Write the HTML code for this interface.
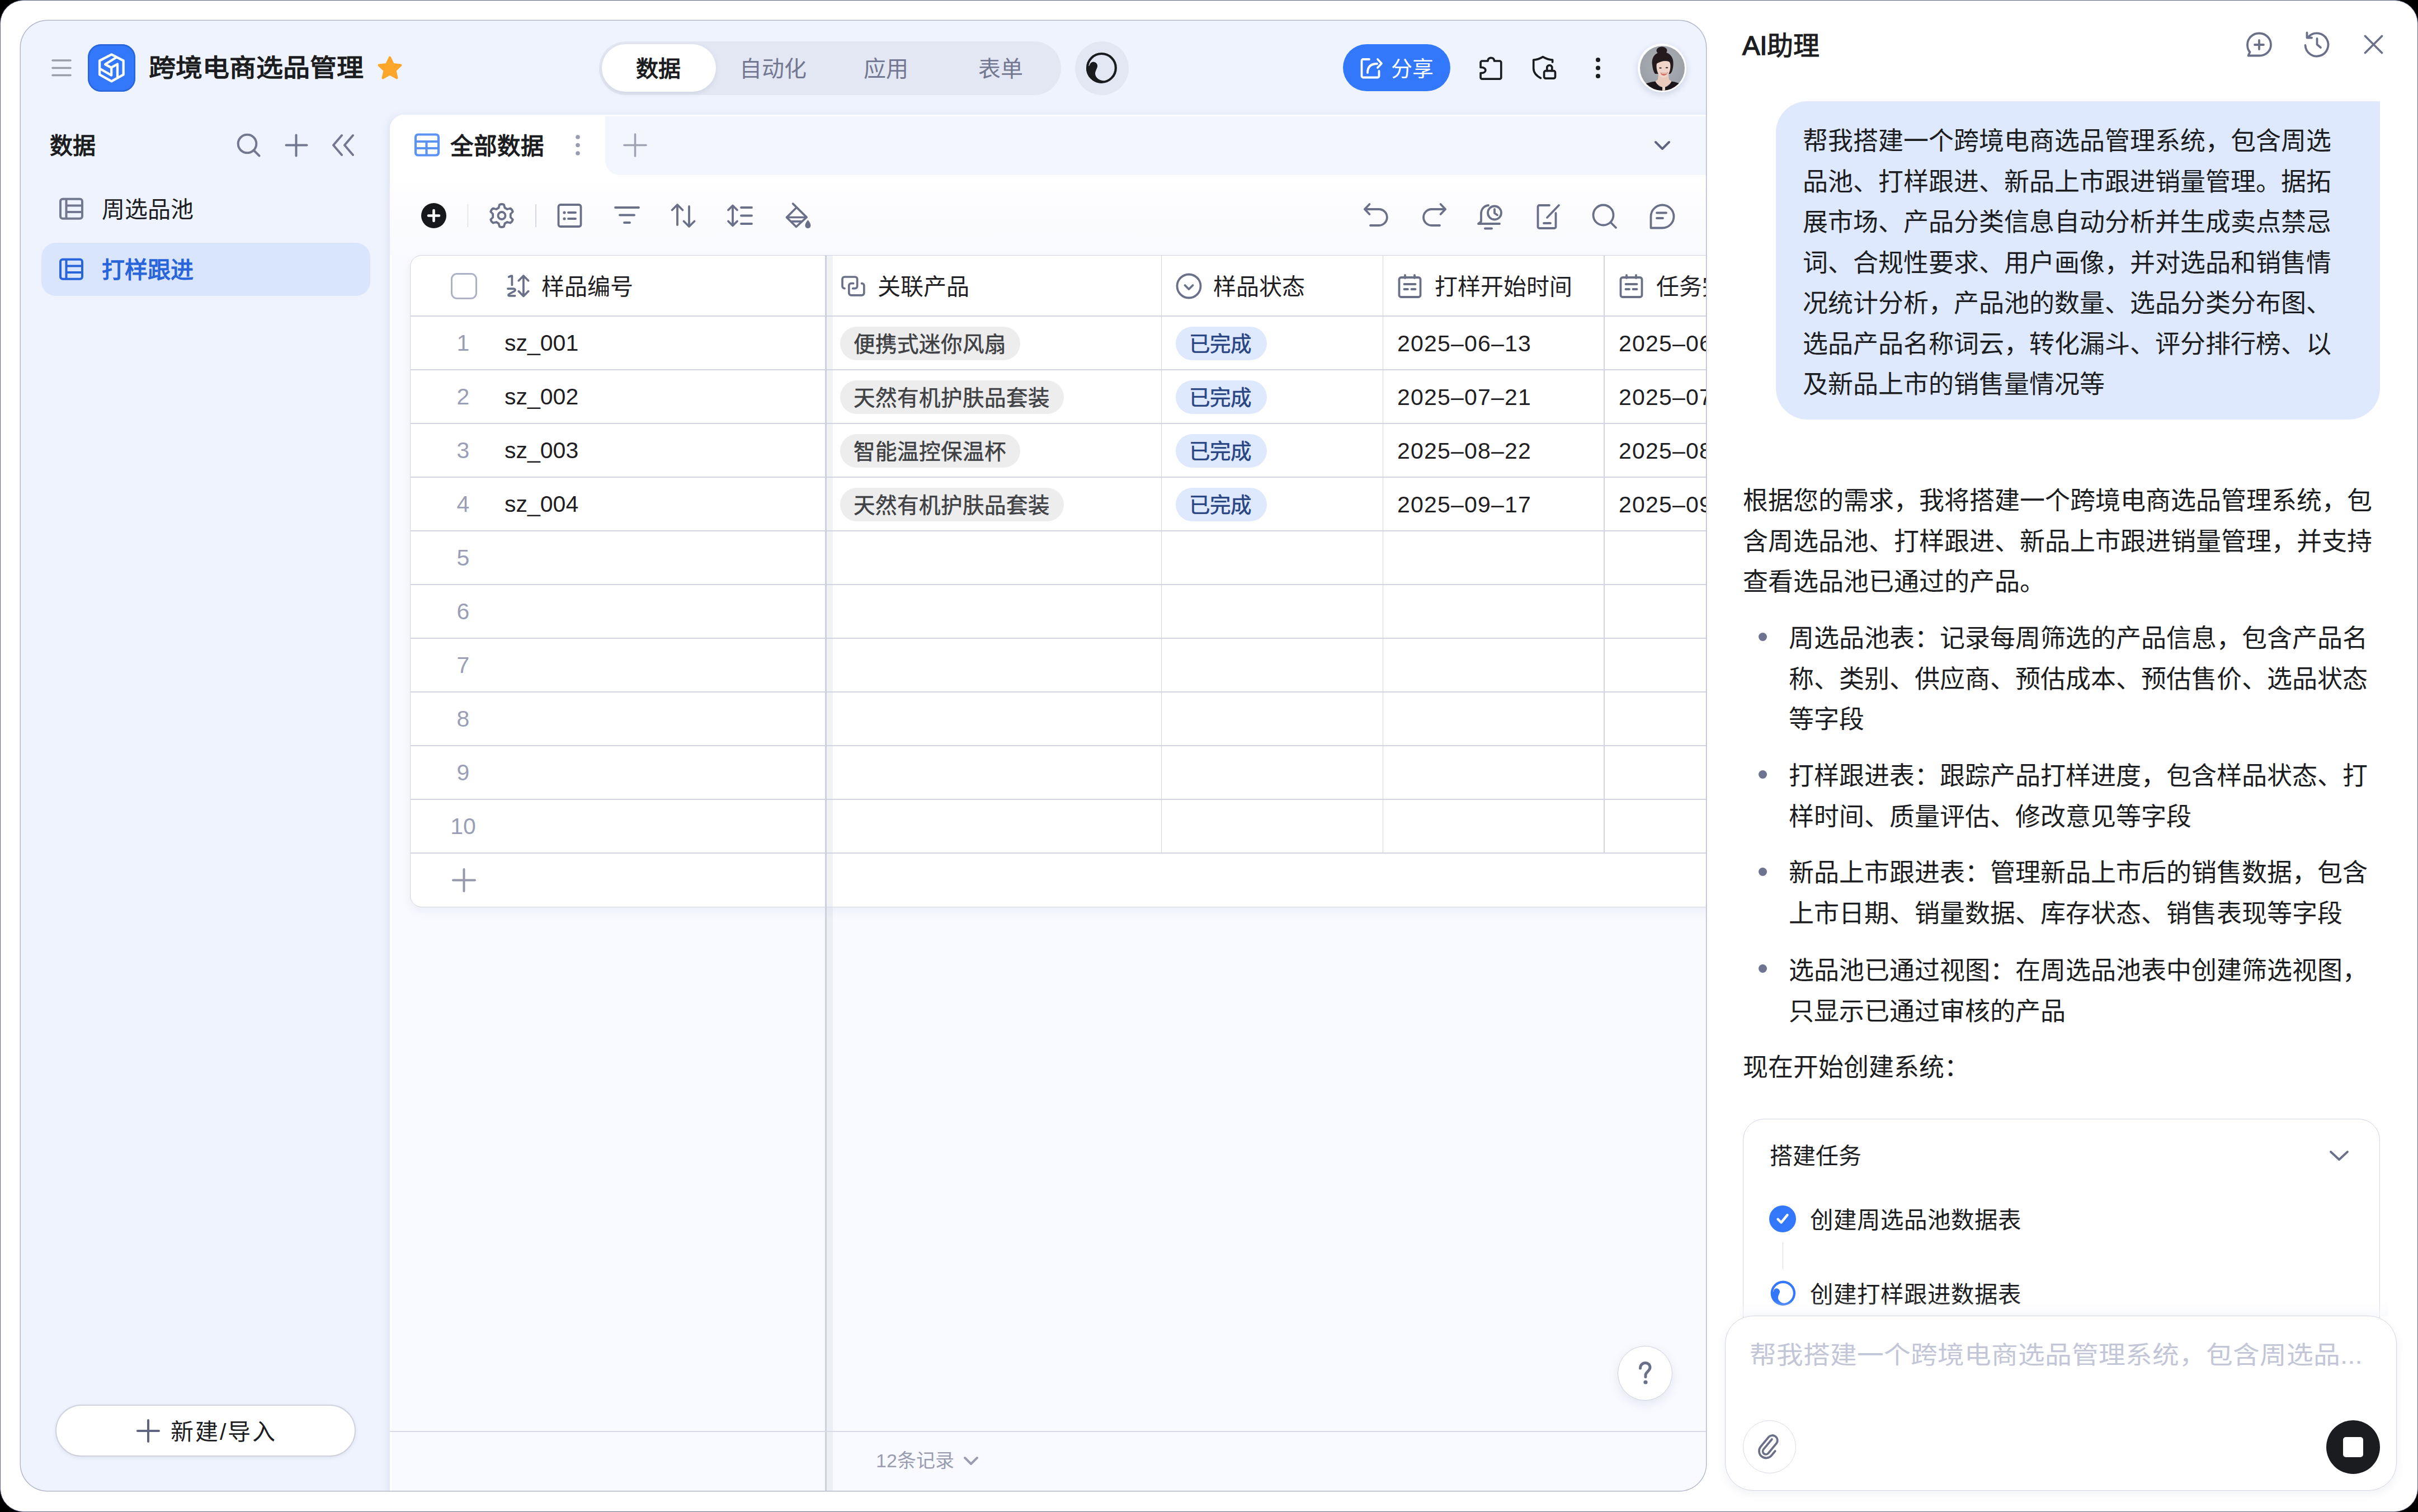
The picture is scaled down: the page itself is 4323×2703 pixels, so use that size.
<!DOCTYPE html>
<html lang="zh-CN"><head><meta charset="utf-8">
<style>
*{box-sizing:border-box;margin:0;padding:0}
html,body{width:4323px;height:2703px;overflow:hidden;background:#000}
body{position:relative;font-family:"Liberation Sans",sans-serif;color:#1F2023}
.a{position:absolute}
svg{position:absolute;overflow:visible}
#frame{left:0;top:0;width:4323px;height:2703px;background:#fff;border:1.5px solid #60668A;border-radius:42px}
#main{left:37px;top:37px;width:3012.5px;height:2628px;border-radius:48px;overflow:hidden;background:#EEF3FE;box-shadow:0 0 0 1.5px #B3B7CB}
#pg{left:-37px;top:-37px;width:4323px;height:2703px}
.t{white-space:nowrap;line-height:1}
</style></head>
<body>
<div id="frame" class="a"></div>
<div id="main" class="a"><div id="pg" class="a">

<!-- header -->
<svg style="left:90px;top:104px" width="40" height="34" viewBox="0 0 40 34"><g stroke="#9A9DAA" stroke-width="3.6" stroke-linecap="round"><line x1="4" y1="4" x2="36" y2="4"/><line x1="4" y1="17.5" x2="36" y2="17.5"/><line x1="4" y1="30.5" x2="36" y2="30.5"/></g></svg>
<div class="a" style="left:157px;top:79px;width:85px;height:85px;border-radius:24px;background:#3377FA;box-shadow:inset 0 0 0 2.5px #2A66DA"></div>
<svg style="left:157px;top:79px" width="85" height="85" viewBox="0 0 85 85"><g fill="none" stroke="#fff" stroke-width="4.3" stroke-linejoin="round" stroke-linecap="round"><path d="M42.4 18.4 L63.7 29.5 L63.7 54.4 L42.4 66.3 L21.1 54.4 L21.1 29.5 Z"/><path d="M51.1 23.5 L31.1 36 L42.2 42.2 L42.2 55.6 L21.1 43.5"/><path d="M42.2 41.6 L53 35.6 L53 60.4"/></g></svg>
<div class="a t" style="left:266px;top:98px;font-size:48px;font-weight:700;color:#1C1D21;transform:scaleY(0.92);transform-origin:0 50%">跨境电商选品管理</div>
<svg style="left:673px;top:99px" width="48" height="46" viewBox="0 0 48 46"><path d="M24 3.5 L30 16 L43.5 17.5 L33.5 27 L36.5 40.5 L24 33.5 L11.5 40.5 L14.5 27 L4.5 17.5 L18 16 Z" fill="#FBA62B" stroke="#FBA62B" stroke-width="4" stroke-linejoin="round"/></svg>

<div class="a" style="left:1071px;top:74px;width:826px;height:96px;border-radius:48px;background:#E3E7F3"></div>
<div class="a" style="left:1076px;top:79px;width:204px;height:85px;border-radius:43px;background:#fff;box-shadow:0 3px 8px rgba(80,90,130,0.13)"></div>
<div class="a t" style="left:1137px;top:103px;font-size:40px;font-weight:700;color:#1C1D21">数据</div>
<div class="a t" style="left:1322px;top:103px;font-size:40px;color:#737891">自动化</div>
<div class="a t" style="left:1544px;top:103px;font-size:40px;color:#737891">应用</div>
<div class="a t" style="left:1749px;top:103px;font-size:40px;color:#737891">表单</div>
<div class="a" style="left:1922px;top:74px;width:96px;height:96px;border-radius:48px;background:#E3E7F3"></div>
<svg style="left:1938px;top:90px" width="64" height="64" viewBox="0 0 64 64"><circle cx="31.4" cy="31.4" r="25.4" fill="none" stroke="#1A1B1F" stroke-width="4.2"/><path d="M9.8 27 A7.1 7.1 0 0 1 24 28.5 C23.5 33 20 36.5 20 42 C20.5 49 28 54.5 37 54.5 L31.4 58.8 A27.4 27.4 0 0 1 4 31.4 Z" fill="#1A1B1F"/></svg>

<div class="a" style="left:2401px;top:79px;width:192px;height:84px;border-radius:42px;background:#3377FA"></div>
<svg style="left:2430px;top:100px" width="46" height="44" viewBox="0 0 46 44"><g fill="none" stroke="#fff" stroke-width="3.8" stroke-linecap="round" stroke-linejoin="round"><path d="M18 6 H7 a2.5 2.5 0 0 0 -2.5 2.5 V36 a2.5 2.5 0 0 0 2.5 2.5 H33 a2.5 2.5 0 0 0 2.5 -2.5 V27"/><path d="M15 30 C15 19 21 14 32 14"/><path d="M33 6 L40 13.5 L33 21"/></g></svg>
<div class="a t" style="left:2487px;top:104px;font-size:38px;color:#fff">分享</div>
<svg style="left:2640px;top:96px" width="50" height="50" viewBox="0 0 50 50"><path d="M10 13 H20 V12 A5.9 5.9 0 0 1 31.5 12 V13 H41 a2.8 2.8 0 0 1 2.8 2.8 V42.4 a2.8 2.8 0 0 1 -2.8 2.8 H9.9 a2.8 2.8 0 0 1 -2.8 -2.8 V34.6 H8 C18.5 34.6 18.5 24.4 8 24.4 H7.1 V15.8 a2.8 2.8 0 0 1 2.9 -2.8 Z" fill="none" stroke="#1B1C1F" stroke-width="3.7" stroke-linejoin="round"/></svg>
<svg style="left:2736px;top:96px" width="52" height="50" viewBox="0 0 52 50"><g fill="none" stroke="#1B1C1F" stroke-width="3.7" stroke-linecap="round" stroke-linejoin="round"><path d="M18.5 43.6 C10 39 5.7 33 5.7 26 V11 C11 11 17 9 22.4 5.7 C28 9 33 11 39.6 11 V15"/><rect x="24.6" y="30.6" width="19.9" height="13.6" rx="3"/><path d="M29.8 30.6 V25.1 a4.5 4.5 0 0 1 9 0 V30.6"/></g></svg>
<svg style="left:2850px;top:100px" width="14" height="44" viewBox="0 0 14 44"><g fill="#1B1C1F"><circle cx="7" cy="7" r="4"/><circle cx="7" cy="21.5" r="4"/><circle cx="7" cy="36" r="4"/></g></svg>
<!-- avatar -->
<div class="a" style="left:2928px;top:78px;width:87px;height:87px;border-radius:50%;background:#fff;box-shadow:0 4px 12px rgba(60,70,110,0.18)"></div>
<svg style="left:2931.5px;top:81.5px" width="80" height="80" viewBox="0 0 80 80"><defs><clipPath id="av"><circle cx="40" cy="40" r="40"/></clipPath><radialGradient id="avbg" cx="0.5" cy="0.4" r="0.6"><stop offset="0" stop-color="#ADB0B6"/><stop offset="1" stop-color="#9A9EA6"/></radialGradient></defs><g clip-path="url(#av)"><rect width="80" height="80" fill="url(#avbg)"/><ellipse cx="39" cy="8.5" rx="9.5" ry="7" fill="#231B1D"/><path d="M22 34 C20 20 28 11 40 11 C52 11 61 19 59.5 34 C59 42 57 48 54 50 L27 50 C24 46 22.5 40 22 34 Z" fill="#231B1D"/><path d="M33 50 H51 L52 60 L58 64.5 L42 76 L26 64.5 L32 60 Z" fill="#E9C9BC"/><path d="M29.5 36 C29.5 27 34 23.5 41.5 23.5 C49 23.5 54.5 27 54.5 36 C54.5 47 49 57 42 57 C35 57 29.5 47 29.5 36 Z" fill="#EFD5CA"/><path d="M28 33 C30 24 37 21 43 21 C50 21 55 25 56 31 C51 26 40 25 28 33 Z" fill="#231B1D"/><ellipse cx="36.5" cy="39.5" rx="2.3" ry="1.3" fill="#4A3A3A"/><ellipse cx="48" cy="39" rx="2.3" ry="1.3" fill="#4A3A3A"/><path d="M36.5 47.5 C41 49 46 49 50 46.5 C49 51.5 45 53 42.5 53 C40 53 37.5 51.5 36.5 47.5 Z" fill="#DB6A5F"/><path d="M38 48.3 C41.5 49.5 45.5 49.5 48.8 47.8 L48.3 49.3 C45 50.5 41.5 50.5 38.5 49.6 Z" fill="#F3E6E0"/><path d="M0 80 L4 71 C10 67 18 64.5 27.5 63.5 C31 70 36 74 42 74 C48 74 53 70 56.5 63.5 C64 64.5 72 67 78 71 L82 80 Z" fill="#1C141B"/><rect x="40" y="73" width="5" height="8" fill="#E8D2C5"/></g></svg>


<!-- sidebar -->
<div class="a t" style="left:89px;top:241px;font-size:41px;font-weight:700;color:#1C1D21">数据</div>
<svg style="left:420px;top:235px" width="50" height="48" viewBox="0 0 50 48"><g fill="none" stroke="#737891" stroke-width="4" stroke-linecap="round"><circle cx="22" cy="22" r="16.3"/><line x1="34" y1="34" x2="43.5" y2="43.5"/></g></svg>
<svg style="left:507px;top:237px" width="45" height="45" viewBox="0 0 45 45"><g stroke="#737891" stroke-width="4" stroke-linecap="round"><line x1="22.5" y1="4.5" x2="22.5" y2="41.5"/><line x1="4.5" y1="22.5" x2="41.5" y2="22.5"/></g></svg>
<svg style="left:591px;top:238px" width="46" height="43" viewBox="0 0 46 43"><g fill="none" stroke="#737891" stroke-width="4" stroke-linecap="round" stroke-linejoin="round"><path d="M20 4 L5 21.5 L20 39"/><path d="M40 4 L25 21.5 L40 39"/></g></svg>

<svg style="left:104px;top:352px" width="47" height="43" viewBox="0 0 47 43"><g fill="none" stroke="#737891" stroke-width="4"><rect x="4" y="3.8" width="39" height="35" rx="4"/><line x1="14.5" y1="3.8" x2="14.5" y2="38.8"/><line x1="14.5" y1="15.5" x2="43" y2="15.5"/><line x1="14.5" y1="27" x2="43" y2="27"/></g></svg>
<div class="a t" style="left:182px;top:355px;font-size:41px;color:#1C1D21">周选品池</div>
<div class="a" style="left:74px;top:434px;width:588px;height:95px;border-radius:26px;background:#D9E5FC"></div>
<svg style="left:104px;top:460px" width="47" height="43" viewBox="0 0 47 43"><g fill="none" stroke="#2864DA" stroke-width="4"><rect x="4" y="3.8" width="39" height="35" rx="4"/><line x1="14.5" y1="3.8" x2="14.5" y2="38.8"/><line x1="14.5" y1="15.5" x2="43" y2="15.5"/><line x1="14.5" y1="27" x2="43" y2="27"/></g></svg>
<div class="a t" style="left:182px;top:463px;font-size:41px;font-weight:700;color:#2864DA">打样跟进</div>

<div class="a" style="left:99px;top:2511px;width:537px;height:93px;border-radius:47px;background:#fff;border:2px solid #CFD2DE;box-shadow:0 2px 6px rgba(80,90,130,0.10)"></div>
<svg style="left:243px;top:2536px" width="44" height="44" viewBox="0 0 44 44"><g stroke="#5F6480" stroke-width="4" stroke-linecap="round"><line x1="22" y1="3" x2="22" y2="41"/><line x1="3" y1="22" x2="41" y2="22"/></g></svg>
<div class="a t" style="left:305px;top:2540px;font-size:41px;color:#1C1D21;letter-spacing:3px">新建/导入</div>


<!-- content panel -->
<div id="content" class="a" style="left:697px;top:205px;width:2400px;height:2500px;background:#F9FAFF;border-top-left-radius:26px;box-shadow:-5px 0 12px rgba(120,130,170,0.10), inset 3px 0 0 #fff;overflow:hidden">
</div>
<!-- tab bar -->
<div class="a" style="left:697px;top:205px;width:2400px;height:251px;background:linear-gradient(180deg,#FFFFFF 0px,#FFFFFF 108px,#FDFDFF 150px,#F9FAFD 251px);border-top-left-radius:26px"></div>
<div class="a" style="left:1082px;top:208px;width:2000px;height:105px;background:#F3F6FD;border-bottom-left-radius:26px"></div>
<div class="a" style="left:697px;top:205px;width:385px;height:108px;background:#fff;border-top-left-radius:26px;border-top-right-radius:26px"></div>
<svg style="left:740px;top:238px" width="47" height="43" viewBox="0 0 47 43"><g fill="none" stroke="#5B93F5" stroke-width="4.2"><rect x="3" y="2.5" width="41" height="37" rx="4.5"/><line x1="3" y1="15" x2="44" y2="15"/><line x1="3" y1="27" x2="44" y2="27"/><line x1="22.5" y1="15" x2="22.5" y2="39.5"/></g></svg>
<div class="a t" style="left:805px;top:241px;font-size:41.5px;font-weight:700;color:#1C1D21">全部数据</div>
<svg style="left:1026px;top:238px" width="14" height="44" viewBox="0 0 14 44"><g fill="#9A9DAF"><circle cx="7" cy="7" r="3.8"/><circle cx="7" cy="21.5" r="3.8"/><circle cx="7" cy="36" r="3.8"/></g></svg>
<svg style="left:1113px;top:237px" width="45" height="45" viewBox="0 0 45 45"><g stroke="#A0A3B3" stroke-width="3.6" stroke-linecap="round"><line x1="22.5" y1="3" x2="22.5" y2="42"/><line x1="3" y1="22.5" x2="42" y2="22.5"/></g></svg>
<svg style="left:2954px;top:248px" width="36" height="24" viewBox="0 0 36 24"><path d="M6 6 L18 18 L30 6" fill="none" stroke="#5F6480" stroke-width="4" stroke-linecap="round" stroke-linejoin="round"/></svg>

<!-- table -->
<div class="a" style="left:733px;top:456px;width:2400px;height:1166px;background:#fff;border:1.8px solid #D2D4E1;border-radius:21px 0 0 21px;box-shadow:0 8px 16px rgba(90,100,140,0.07)"></div>
<div class="a" style="left:734px;top:563.75px;width:2400px;height:1.8px;background:#D2D4E1"></div>
<div class="a" style="left:734px;top:659.75px;width:2400px;height:1.8px;background:#D2D4E1"></div>
<div class="a" style="left:734px;top:755.75px;width:2400px;height:1.8px;background:#D2D4E1"></div>
<div class="a" style="left:734px;top:851.75px;width:2400px;height:1.8px;background:#D2D4E1"></div>
<div class="a" style="left:734px;top:947.75px;width:2400px;height:1.8px;background:#D2D4E1"></div>
<div class="a" style="left:734px;top:1043.75px;width:2400px;height:1.8px;background:#D2D4E1"></div>
<div class="a" style="left:734px;top:1139.75px;width:2400px;height:1.8px;background:#D2D4E1"></div>
<div class="a" style="left:734px;top:1235.75px;width:2400px;height:1.8px;background:#D2D4E1"></div>
<div class="a" style="left:734px;top:1331.75px;width:2400px;height:1.8px;background:#D2D4E1"></div>
<div class="a" style="left:734px;top:1427.75px;width:2400px;height:1.8px;background:#D2D4E1"></div>
<div class="a" style="left:734px;top:1523.75px;width:2400px;height:1.8px;background:#D2D4E1"></div>
<div class="a" style="left:2075.6px;top:457px;width:1.8px;height:1067.5px;background:#D2D4E1"></div>
<div class="a" style="left:2471.6px;top:457px;width:1.8px;height:1067.5px;background:#D2D4E1"></div>
<div class="a" style="left:2867.1px;top:457px;width:1.8px;height:1067.5px;background:#D2D4E1"></div>
<div class="a" style="left:1489px;top:456px;width:1px;height:1px"></div>
<div class="a" style="left:1477px;top:456px;width:12px;height:2210px;background:rgba(210,212,225,0.30)"></div>
<div class="a" style="left:1475px;top:456px;width:2.5px;height:2210px;background:#CDD0DF"></div>
<div class="a" style="left:806px;top:488px;width:47px;height:47px;border-radius:11px;border:3px solid #ADB1C7;background:#fff"></div>
<svg style="left:905px;top:490px" width="43" height="44" viewBox="0 0 43 44"><g fill="none" stroke="#6B7089" stroke-width="3.7" stroke-linecap="round" stroke-linejoin="round"><path d="M4.7 5.1 C6.5 4 8 3 10.4 3.1 V19.4"/><path d="M2.9 26.1 H12.8 C16 26.1 17.2 29 14.5 30.6 L5.5 35.5 C3 37 3.5 38.8 6 38.8 H15.6"/><path d="M30.9 3.5 V39.5 M22.3 11.8 L30.9 3 L39.6 11.8 M22.3 30.6 L30.9 39.5 L39.6 30.6"/></g></svg>
<div class="a t" style="left:968px;top:493px;font-size:41px;color:#1F2023">样品编号</div>
<svg style="left:1502px;top:490px" width="47" height="42" viewBox="0 0 47 42"><g fill="none" stroke="#6B7089" stroke-width="3.7" stroke-linecap="round" stroke-linejoin="round"><path d="M7.8 25.7 H8 a4 4 0 0 1 -4 -4 V9 a4 4 0 0 1 4 -4 H26.6 a4 4 0 0 1 4 4 V21.7 a4 4 0 0 1 -4 4 H22.7"/><path d="M23.7 16.7 H19.8 a4 4 0 0 0 -4 4 V33.8 a4 4 0 0 0 4 4 H38.8 a4 4 0 0 0 4 -4 V20.7 a4 4 0 0 0 -4 -4 H38.5"/></g></svg>
<div class="a t" style="left:1569px;top:493px;font-size:41px;color:#1F2023">关联产品</div>
<svg style="left:2101px;top:487px" width="49" height="49" viewBox="0 0 49 49"><g fill="none" stroke="#6B7089" stroke-width="3.8" stroke-linecap="round" stroke-linejoin="round"><circle cx="24.5" cy="24.5" r="21"/><path d="M17.5 23 L24.5 30 L31.5 23"/></g></svg>
<div class="a t" style="left:2169px;top:493px;font-size:41px;color:#1F2023">样品状态</div>
<svg style="left:2498px;top:489px" width="45" height="45" viewBox="0 0 45 45"><g fill="none" stroke="#6B7089" stroke-width="3.8" stroke-linecap="round" stroke-linejoin="round"><rect x="3.5" y="7" width="38" height="35" rx="3.5"/><path d="M14 3 V8 M31 3 V8"/><path d="M12.5 19 H32.5"/><path d="M12.5 28 H19 M25.5 28 H32.5"/></g></svg>
<div class="a t" style="left:2565px;top:493px;font-size:41px;color:#1F2023">打样开始时间</div>
<svg style="left:2894px;top:489px" width="45" height="45" viewBox="0 0 45 45"><g fill="none" stroke="#6B7089" stroke-width="3.8" stroke-linecap="round" stroke-linejoin="round"><rect x="3.5" y="7" width="38" height="35" rx="3.5"/><path d="M14 3 V8 M31 3 V8"/><path d="M12.5 19 H32.5"/><path d="M12.5 28 H19 M25.5 28 H32.5"/></g></svg>
<div class="a t" style="left:2961px;top:493px;font-size:41px;color:#1F2023">任务完成时间</div>
<div class="a t" style="left:788px;width:80px;text-align:center;top:593px;font-size:41px;color:#9A9FB5">1</div>
<div class="a t" style="left:902px;top:592.5px;font-size:41px;color:#1F2023">sz_001</div>
<div class="a t" style="left:1502px;top:583.5px;height:60px;padding:0 25px 0 24px;line-height:64px;border-radius:30px;background:#EDEDEE;font-size:38.5px;color:#404144;-webkit-text-stroke:0.6px #404144">便携式迷你风扇</div>
<div class="a t" style="left:2102px;top:583.5px;height:60px;padding:0 28px 0 24px;line-height:63px;border-radius:30px;background:#DEE9FD;font-size:37.5px;color:#294584;-webkit-text-stroke:0.6px #294584">已完成</div>
<div class="a t" style="left:2498px;top:593.5px;font-size:41px;letter-spacing:1.2px;color:#1F2023">2025–06–13</div>
<div class="a t" style="left:2894px;top:593.5px;font-size:41px;letter-spacing:1.2px;color:#1F2023">2025–06–20</div>
<div class="a t" style="left:788px;width:80px;text-align:center;top:689px;font-size:41px;color:#9A9FB5">2</div>
<div class="a t" style="left:902px;top:688.5px;font-size:41px;color:#1F2023">sz_002</div>
<div class="a t" style="left:1502px;top:679.5px;height:60px;padding:0 25px 0 24px;line-height:64px;border-radius:30px;background:#EDEDEE;font-size:38.5px;color:#404144;-webkit-text-stroke:0.6px #404144">天然有机护肤品套装</div>
<div class="a t" style="left:2102px;top:679.5px;height:60px;padding:0 28px 0 24px;line-height:63px;border-radius:30px;background:#DEE9FD;font-size:37.5px;color:#294584;-webkit-text-stroke:0.6px #294584">已完成</div>
<div class="a t" style="left:2498px;top:689.5px;font-size:41px;letter-spacing:1.2px;color:#1F2023">2025–07–21</div>
<div class="a t" style="left:2894px;top:689.5px;font-size:41px;letter-spacing:1.2px;color:#1F2023">2025–07–28</div>
<div class="a t" style="left:788px;width:80px;text-align:center;top:785px;font-size:41px;color:#9A9FB5">3</div>
<div class="a t" style="left:902px;top:784.5px;font-size:41px;color:#1F2023">sz_003</div>
<div class="a t" style="left:1502px;top:775.5px;height:60px;padding:0 25px 0 24px;line-height:64px;border-radius:30px;background:#EDEDEE;font-size:38.5px;color:#404144;-webkit-text-stroke:0.6px #404144">智能温控保温杯</div>
<div class="a t" style="left:2102px;top:775.5px;height:60px;padding:0 28px 0 24px;line-height:63px;border-radius:30px;background:#DEE9FD;font-size:37.5px;color:#294584;-webkit-text-stroke:0.6px #294584">已完成</div>
<div class="a t" style="left:2498px;top:785.5px;font-size:41px;letter-spacing:1.2px;color:#1F2023">2025–08–22</div>
<div class="a t" style="left:2894px;top:785.5px;font-size:41px;letter-spacing:1.2px;color:#1F2023">2025–08–29</div>
<div class="a t" style="left:788px;width:80px;text-align:center;top:881px;font-size:41px;color:#9A9FB5">4</div>
<div class="a t" style="left:902px;top:880.5px;font-size:41px;color:#1F2023">sz_004</div>
<div class="a t" style="left:1502px;top:871.5px;height:60px;padding:0 25px 0 24px;line-height:64px;border-radius:30px;background:#EDEDEE;font-size:38.5px;color:#404144;-webkit-text-stroke:0.6px #404144">天然有机护肤品套装</div>
<div class="a t" style="left:2102px;top:871.5px;height:60px;padding:0 28px 0 24px;line-height:63px;border-radius:30px;background:#DEE9FD;font-size:37.5px;color:#294584;-webkit-text-stroke:0.6px #294584">已完成</div>
<div class="a t" style="left:2498px;top:881.5px;font-size:41px;letter-spacing:1.2px;color:#1F2023">2025–09–17</div>
<div class="a t" style="left:2894px;top:881.5px;font-size:41px;letter-spacing:1.2px;color:#1F2023">2025–09–24</div>
<div class="a t" style="left:788px;width:80px;text-align:center;top:977px;font-size:41px;color:#9A9FB5">5</div>
<div class="a t" style="left:788px;width:80px;text-align:center;top:1073px;font-size:41px;color:#9A9FB5">6</div>
<div class="a t" style="left:788px;width:80px;text-align:center;top:1169px;font-size:41px;color:#9A9FB5">7</div>
<div class="a t" style="left:788px;width:80px;text-align:center;top:1265px;font-size:41px;color:#9A9FB5">8</div>
<div class="a t" style="left:788px;width:80px;text-align:center;top:1361px;font-size:41px;color:#9A9FB5">9</div>
<div class="a t" style="left:788px;width:80px;text-align:center;top:1457px;font-size:41px;color:#9A9FB5">10</div>
<svg style="left:808px;top:1552px" width="43" height="43" viewBox="0 0 43 43"><g stroke="#9599AB" stroke-width="4" stroke-linecap="round"><line x1="21.5" y1="2" x2="21.5" y2="41"/><line x1="2" y1="21.5" x2="41" y2="21.5"/></g></svg>
<div class="a" style="left:697px;top:2558px;width:2400px;height:2px;background:#D8DAE5"></div>
<div class="a t" style="left:1566px;top:2594px;font-size:34px;color:#9A9DB0">12条记录</div>
<svg style="left:1720px;top:2600px" width="32" height="24" viewBox="0 0 32 24"><path d="M5 6 L16 17 L27 6" fill="none" stroke="#9A9DB0" stroke-width="4" stroke-linecap="round" stroke-linejoin="round"/></svg>
<div class="a" style="left:2892px;top:2406px;width:98px;height:98px;border-radius:50%;background:#fff;border:1.5px solid #CDD0DD;box-shadow:0 6px 18px rgba(80,90,130,0.12)"></div>
<svg style="left:2916px;top:2430px" width="50" height="50" viewBox="0 0 50 50"><path d="M16.5 16 C16.5 10 21 6.5 25.5 6.5 C30.5 6.5 34 10 34 14.5 C34 20 27.5 22 26 27.5 V31.5" fill="none" stroke="#6B7089" stroke-width="5" stroke-linecap="round"/><circle cx="26" cy="41" r="3.6" fill="#6B7089"/></svg>
<!-- toolbar -->
<svg style="left:753px;top:363px" width="45" height="45" viewBox="0 0 45 45"><circle cx="22.5" cy="22.5" r="22.5" fill="#17181C"/><g stroke="#fff" stroke-width="4.6" stroke-linecap="round"><line x1="22.5" y1="13" x2="22.5" y2="32"/><line x1="13" y1="22.5" x2="32" y2="22.5"/></g></svg>
<div class="a" style="left:835.5px;top:365px;width:1.8px;height:41px;background:#D5D7E2"></div>
<svg style="left:873px;top:361px" width="48" height="49" viewBox="0 0 48 49"><g fill="none" stroke="#6B7089" stroke-width="3.8" stroke-linejoin="round"><path d="M20 5 Q24 3 28 5 L29.5 10.5 L33.8 13 L39.3 11.5 Q42.8 13.5 43.8 17.5 L39.8 21.5 V27.5 L43.8 31.5 Q42.8 35.5 39.3 37.5 L33.8 36 L29.5 38.5 L28 44 Q24 46 20 44 L18.5 38.5 L14.2 36 L8.7 37.5 Q5.2 35.5 4.2 31.5 L8.2 27.5 V21.5 L4.2 17.5 Q5.2 13.5 8.7 11.5 L14.2 13 L18.5 10.5 Z"/><circle cx="24" cy="24.5" r="6.5"/></g></svg>
<div class="a" style="left:957px;top:365px;width:1.8px;height:41px;background:#D5D7E2"></div>
<svg style="left:995px;top:363px" width="47" height="45" viewBox="0 0 47 45"><g fill="none" stroke="#6B7089" stroke-width="3.8"><rect x="3.5" y="3" width="40" height="39" rx="3.5"/></g><g fill="#6B7089"><circle cx="14" cy="17" r="2.6"/><circle cx="14" cy="28" r="2.6"/></g><g stroke="#6B7089" stroke-width="3.8" stroke-linecap="round"><line x1="21" y1="17" x2="34" y2="17"/><line x1="21" y1="28" x2="34" y2="28"/></g></svg>
<svg style="left:1096px;top:366px" width="50" height="38" viewBox="0 0 50 38"><g stroke="#6B7089" stroke-width="3.8" stroke-linecap="round"><line x1="4" y1="5" x2="46" y2="5"/><line x1="12" y1="18.5" x2="38" y2="18.5"/><line x1="20" y1="32" x2="30" y2="32"/></g></svg>
<svg style="left:1198px;top:362px" width="48" height="47" viewBox="0 0 48 47"><g fill="none" stroke="#6B7089" stroke-width="3.8" stroke-linecap="round" stroke-linejoin="round"><path d="M13 40 V4 M3.5 13.5 L13 4 L22.5 13.5"/><path d="M34 7 V43 M24.5 33.5 L34 43 L43.5 33.5"/></g></svg>
<svg style="left:1299px;top:363px" width="50" height="45" viewBox="0 0 50 45"><g fill="none" stroke="#6B7089" stroke-width="3.8" stroke-linecap="round" stroke-linejoin="round"><path d="M11 5 V40 M3 12.5 L11 4.5 L19 12.5 M3 32.5 L11 40.5 L19 32.5"/><path d="M26 8 H45 M26 22.5 H45 M26 37 H45"/></g></svg>
<svg style="left:1402px;top:360px" width="51" height="51" viewBox="0 0 51 51"><g fill="none" stroke="#6B7089" stroke-width="3.7" stroke-linecap="round" stroke-linejoin="round"><path d="M15.6 4.1 L40.1 28.4 L21.5 45.5 L4.4 28.6 L22.3 10.8"/><path d="M5 28.5 H39.5"/><path d="M12.9 35.9 H30.9"/></g><path d="M42.4 33 C39 37 37.4 40.5 37.4 43.2 a5 5 0 0 0 10 0 C47.4 40.5 45.8 37 42.4 33 Z" fill="#6B7089"/></svg>

<svg style="left:2436px;top:362px" width="46" height="46" viewBox="0 0 46 46"><g fill="none" stroke="#6B7089" stroke-width="3.8" stroke-linecap="round" stroke-linejoin="round"><path d="M12.5 3 L3.8 12 L12.5 21"/><path d="M5 12 H29.3 a14.5 14.5 0 0 1 0 29 H14"/></g></svg>
<svg style="left:2542px;top:362px" width="46" height="46" viewBox="0 0 46 46"><g fill="none" stroke="#6B7089" stroke-width="3.8" stroke-linecap="round" stroke-linejoin="round"><path d="M33.5 3 L42.2 12 L33.5 21"/><path d="M41 12 H17.5 a14.5 14.5 0 0 0 0 29 H32"/></g></svg>
<svg style="left:2640px;top:362.5px" width="50" height="49" viewBox="0 0 50 49"><g fill="none" stroke="#6B7089" stroke-width="3.8" stroke-linecap="round" stroke-linejoin="round"><path d="M21 4 C13 5 8 11 8 19 V33 L3 37 H41"/><circle cx="32" cy="17.5" r="12"/><path d="M32 11 V18 L37 21.5"/><path d="M15 45.5 H27"/></g></svg>
<svg style="left:2746px;top:362.5px" width="45" height="49" viewBox="0 0 45 49"><g fill="none" stroke="#6B7089" stroke-width="3.8" stroke-linecap="round" stroke-linejoin="round"><path d="M24 4 H6 a2.5 2.5 0 0 0 -2.5 2.5 V42.5 a2.5 2.5 0 0 0 2.5 2.5 H33 a2.5 2.5 0 0 0 2.5 -2.5 V18"/><path d="M41 4 L20 26"/><path d="M14 36 H26"/></g></svg>
<svg style="left:2845px;top:362.5px" width="50" height="49" viewBox="0 0 50 49"><g fill="none" stroke="#6B7089" stroke-width="3.8" stroke-linecap="round"><circle cx="21.5" cy="21.5" r="18"/><line x1="34.5" y1="34.5" x2="44" y2="44"/></g></svg>
<svg style="left:2948px;top:362.5px" width="48" height="49" viewBox="0 0 48 49"><g fill="none" stroke="#6B7089" stroke-width="3.8" stroke-linecap="round" stroke-linejoin="round"><path d="M3.5 44.5 V24 a20.5 20.5 0 1 1 20.5 20.5 Z"/><path d="M14 17.5 H31 M14 27 H25"/></g></svg>

</div></div>

<!-- AI panel -->
<div class="a t" style="left:3115px;top:58px;font-size:47px;font-weight:500;color:#1C1D21"><span style="-webkit-text-stroke:1.4px #1C1D21;font-size:47.5px;letter-spacing:-0.5px">AI</span><span style="-webkit-text-stroke:1px #1C1D21">助理</span></div>
<svg style="left:4012px;top:54px" width="54" height="50" viewBox="0 0 54 50"><g fill="none" stroke="#6B7089" stroke-width="3.8" stroke-linecap="round" stroke-linejoin="round"><path d="M10.5 39 C7 35.5 6 31.5 6 26 C6 14.5 15.5 5.5 27 5.5 C38.5 5.5 48 14.5 48 26 C48 37.5 38.5 45.5 27 45.5 H7.5 Z"/><path d="M27 18 V34 M19 26 H35"/></g></svg>
<svg style="left:4116px;top:54px" width="50" height="50" viewBox="0 0 50 50"><g fill="none" stroke="#6B7089" stroke-width="3.8" stroke-linecap="round" stroke-linejoin="round"><path d="M5.5 27 A20.5 20.5 0 1 0 12 11"/><path d="M8.5 4.5 L8.5 13.5 L17 13.5"/><path d="M26.5 15 V25.5 L33 31"/></g></svg>
<svg style="left:4223px;top:59px" width="41" height="41" viewBox="0 0 41 41"><g stroke="#6B7089" stroke-width="3.8" stroke-linecap="round"><line x1="5.5" y1="5.5" x2="35.5" y2="35.5"/><line x1="35.5" y1="5.5" x2="5.5" y2="35.5"/></g></svg>

<div class="a" style="left:3175px;top:181px;width:1080px;height:569px;background:#DFE9FD;border-radius:0 0 56px 56px;border-top-left-radius:56px"></div>
<div class="a" style="left:3223px;top:217px;font-size:45px;line-height:72.5px;color:#1C1D21;white-space:nowrap">帮我搭建一个跨境电商选品管理系统，包含周选<br>品池、打样跟进、新品上市跟进销量管理。据拓<br>展市场、产品分类信息自动分析并生成卖点禁忌<br>词、合规性要求、用户画像，并对选品和销售情<br>况统计分析，产品池的数量、选品分类分布图、<br>选品产品名称词云，转化漏斗、评分排行榜、以<br>及新品上市的销售量情况等</div>

<div class="a" style="left:3116px;top:860px;font-size:45px;line-height:72.5px;color:#1C1D21;white-space:nowrap">根据您的需求，我将搭建一个跨境电商选品管理系统，包<br>含周选品池、打样跟进、新品上市跟进销量管理，并支持<br>查看选品池已通过的产品。</div>

<div class="a" style="left:3144px;top:1131px;width:15px;height:15px;border-radius:50%;background:#6E7390"></div>
<div class="a" style="left:3198px;top:1106px;font-size:45px;line-height:72.5px;color:#1C1D21;white-space:nowrap">周选品池表：记录每周筛选的产品信息，包含产品名<br>称、类别、供应商、预估成本、预估售价、选品状态<br>等字段</div>
<div class="a" style="left:3144px;top:1377px;width:15px;height:15px;border-radius:50%;background:#6E7390"></div>
<div class="a" style="left:3198px;top:1352px;font-size:45px;line-height:72.5px;color:#1C1D21;white-space:nowrap">打样跟进表：跟踪产品打样进度，包含样品状态、打<br>样时间、质量评估、修改意见等字段</div>
<div class="a" style="left:3144px;top:1551px;width:15px;height:15px;border-radius:50%;background:#6E7390"></div>
<div class="a" style="left:3198px;top:1525px;font-size:45px;line-height:72.5px;color:#1C1D21;white-space:nowrap">新品上市跟进表：管理新品上市后的销售数据，包含<br>上市日期、销量数据、库存状态、销售表现等字段</div>
<div class="a" style="left:3144px;top:1724px;width:15px;height:15px;border-radius:50%;background:#6E7390"></div>
<div class="a" style="left:3198px;top:1700px;font-size:45px;line-height:72.5px;color:#1C1D21;white-space:nowrap">选品池已通过视图：在周选品池表中创建筛选视图，<br>只显示已通过审核的产品</div>
<div class="a" style="left:3116px;top:1873px;font-size:45px;line-height:72.5px;color:#1C1D21;white-space:nowrap">现在开始创建系统：</div>

<!-- task card -->
<div class="a" style="left:3116px;top:2000px;width:1139px;height:500px;border:1.5px solid #D3D6E3;border-radius:38px;background:#fff"></div>
<div class="a t" style="left:3164px;top:2047px;font-size:41px;color:#1C1D21">搭建任务</div>
<svg style="left:4162px;top:2052px" width="40" height="28" viewBox="0 0 40 28"><path d="M5 7 L20 21 L35 7" fill="none" stroke="#6B7089" stroke-width="3.8" stroke-linecap="round" stroke-linejoin="round"/></svg>
<svg style="left:3163px;top:2155px" width="48" height="48" viewBox="0 0 48 48"><circle cx="24" cy="24" r="24" fill="#3377FA"/><path d="M15.5 24.5 L21.5 30.5 L32.5 17" fill="none" stroke="#fff" stroke-width="4.4" stroke-linecap="round" stroke-linejoin="round"/></svg>
<div class="a t" style="left:3236px;top:2161px;font-size:41.5px;color:#1C1D21">创建周选品池数据表</div>
<div class="a" style="left:3186.5px;top:2221px;width:1.5px;height:48px;background:#D8DAE5"></div>
<svg style="left:3162.5px;top:2286.5px" width="64" height="64" viewBox="0 0 64 64"><g transform="scale(0.792)"><circle cx="31.4" cy="31.4" r="25.4" fill="none" stroke="#3377FA" stroke-width="5.4"/><path d="M9.8 27 A7.1 7.1 0 0 1 24 28.5 C23.5 33 20 36.5 20 42 C20.5 49 28 54.5 37 54.5 L31.4 58.8 A27.4 27.4 0 0 1 4 31.4 Z" fill="#3377FA"/></g></svg>
<div class="a t" style="left:3236px;top:2294px;font-size:41.5px;color:#1C1D21">创建打样跟进数据表</div>
<div class="a" style="left:3110px;top:2325px;width:1160px;height:28px;background:linear-gradient(180deg,rgba(255,255,255,0),rgba(248,249,252,0.7))"></div>

<!-- input card -->
<div class="a" style="left:3084px;top:2352px;width:1201px;height:313px;border:1.5px solid #D3D6E3;border-radius:50px;background:#fff;box-shadow:0 6px 16px rgba(80,90,130,0.08)"></div>
<div class="a t" style="left:3128px;top:2399px;font-size:47.7px;color:#C3C6D6;transform:scaleY(0.93);transform-origin:0 50%">帮我搭建一个跨境电商选品管理系统，包含周选品...</div>
<div class="a" style="left:3116px;top:2539px;width:95px;height:95px;border-radius:50%;border:1.5px solid #D9DBE5;background:#fff"></div>
<svg style="left:3138px;top:2561px" width="50" height="50" viewBox="0 0 50 50"><path d="M31 12.5 L14.5 29 a5.5 5.5 0 0 0 7.8 7.8 L38.5 20.5 a9 9 0 0 0 -12.7 -12.7 L10 23.6 a12.5 12.5 0 0 0 17.7 17.7 L35 34" fill="none" stroke="#6B7089" stroke-width="3.8" stroke-linecap="round" stroke-linejoin="round" transform="rotate(-5 25 25)"/></svg>
<div class="a" style="left:4159px;top:2539px;width:96px;height:96px;border-radius:50%;background:#1B1C20"></div>
<div class="a" style="left:4189px;top:2569px;width:36px;height:36px;border-radius:5px;background:#fff"></div>

</body></html>
